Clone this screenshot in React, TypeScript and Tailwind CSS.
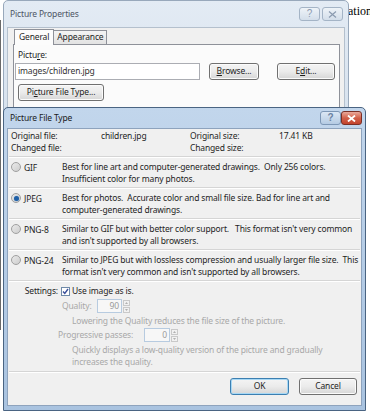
import React from "react";

function TitleBtn({ kind, active }: { kind: "help" | "close"; active?: boolean }) {
  if (kind === "close") {
    return (
      <div
        className={
          active
            ? "w-[21px] h-[14px] rounded-[3px] border border-[#7a2f26] bg-gradient-to-b from-[#e9a99b] via-[#d2604a] to-[#c2432c] flex items-center justify-center"
            : "w-[21px] h-[14px] rounded-[3px] border border-[#a4b4c6] bg-gradient-to-b from-[#eef3f8] to-[#d3deea] flex items-center justify-center"
        }
      >
        <svg width="9" height="7" viewBox="0 0 9 7">
          <path
            d="M1 0.5 L8 6.5 M8 0.5 L1 6.5"
            stroke={active ? "#ffffff" : "#8b9bb0"}
            strokeWidth={active ? 1.8 : 1.2}
            fill="none"
          />
        </svg>
      </div>
    );
  }
  return (
    <div
      className={
        active
          ? "w-[21px] h-[14px] rounded-[3px] border border-[#7d97b6] bg-gradient-to-b from-[#dbe7f4] to-[#b5cbe3] flex items-center justify-center"
          : "w-[21px] h-[14px] rounded-[3px] border border-[#a4b4c6] bg-gradient-to-b from-[#eef3f8] to-[#d3deea] flex items-center justify-center"
      }
    >
      <span
        className={
          active
            ? "text-[10px] leading-none font-bold text-[#6a82a2] font-['Liberation_Sans',sans-serif]"
            : "text-[10px] leading-none text-[#8b9bb0] font-['Liberation_Sans',sans-serif]"
        }
      >
        ?
      </span>
    </div>
  );
}

function Btn({ children, w, def }: { children: React.ReactNode; w: string; def?: boolean }) {
  return (
    <div
      className={
        (def
          ? "border-[#3c7fb1] shadow-[inset_0_0_0_1px_#a7d8f5] "
          : "border-[#707070] shadow-[inset_0_0_0_1px_#fbfbfb] ") +
        w +
        " h-[17px] rounded-[3px] border bg-gradient-to-b from-[#f4f4f4] via-[#ebebeb] to-[#d6d6d6] flex items-center justify-center text-[#1e1e1e]"
      }
    >
      {children}
    </div>
  );
}

function Radio({ on }: { on?: boolean }) {
  return (
    <div className="w-[10px] h-[10px] rounded-full border border-[#a0a0a0] bg-gradient-to-br from-[#eaeaea] to-[#cdcdcd] flex items-center justify-center shrink-0">
      {on && <div className="w-[5px] h-[5px] rounded-full bg-[#1f5fa6] shadow-[0_0_1px_#6fa5dc]" />}
    </div>
  );
}

function Sep() {
  return <div className="-mx-[2px] h-[2px] border-t border-[#d5d5d5] border-b border-b-white" />;
}

function Spinner({ value, w }: { value: string; w: string }) {
  return (
    <div className="flex items-center gap-[1px]">
      <div className={w + " h-[14px] border border-[#b7cbe0] bg-[#f7f7f7] flex items-center justify-end pr-[2px] text-[#9a9a9a]"}>
        {value}
      </div>
      <div className="flex flex-col gap-[1px]">
        <div className="w-[7px] h-[6px] border border-[#c9c9c9] bg-[#f1f1f1] flex items-center justify-center">
          <svg width="3" height="2" viewBox="0 0 3 2"><path d="M0 2 L1.5 0 L3 2 Z" fill="#b0b0b0" /></svg>
        </div>
        <div className="w-[7px] h-[6px] border border-[#c9c9c9] bg-[#f1f1f1] flex items-center justify-center">
          <svg width="3" height="2" viewBox="0 0 3 2"><path d="M0 0 L1.5 2 L3 0 Z" fill="#b0b0b0" /></svg>
        </div>
      </div>
    </div>
  );
}

function Option({ label, on, lines }: { label: string; on?: boolean; lines: string[] }) {
  return (
    <div className="flex pt-[3px] pb-[2px]">
      <div className="w-[51px] shrink-0 flex items-start gap-[3px] pt-[1px] whitespace-nowrap">
        <Radio on={on} />
        <span className="leading-[11px]">{label}</span>
      </div>
      <div className="flex flex-col leading-[12px]">
        {lines.map((l, i) => (
          <span key={i} className="whitespace-pre">{l}</span>
        ))}
      </div>
    </div>
  );
}

function PictureProperties() {
  return (
    <div className="absolute left-[3px] top-0 w-[346px] h-[116px] overflow-hidden border border-[#98a8bb] rounded-t-[5px] bg-gradient-to-b from-[#e3ebf4] to-[#d7e2ee] flex flex-col">
      <div className="h-[26px] shrink-0 flex items-center justify-between pl-[6px] pr-[5px]">
        <span className="text-[8.5px] text-[#4d5563]">Picture Properties</span>
        <div className="flex gap-[2px]">
          <TitleBtn kind="help" />
          <TitleBtn kind="close" />
        </div>
      </div>
      <div className="flex-1 shrink-0 mx-[3px] border border-[#b4c0cd] bg-[#f0f0f0] pt-[0px] pl-[6px] pr-[4px]">
        <div className="flex items-end h-[16px]">
          <div className="h-[16px] px-[4px] border border-b-0 border-[#8e9199] bg-[#fcfcfc] flex items-center relative top-[1px] z-10">
            General
          </div>
          <div className="h-[14px] px-[3px] border border-l-0 border-b-0 border-[#8e9199] bg-gradient-to-b from-[#f4f4f4] to-[#e2e2e2] flex items-center">
            Appearance
          </div>
        </div>
        <div className="h-[80px] border border-[#8e9199] bg-[#fbfbfb] -ml-[1px] pl-[1px] pt-[3px]">
          <div className="pl-[3px] leading-[13px]">
            Pictu<span className="underline">r</span>e:
          </div>
          <div className="flex items-center mt-[2px]">
            <div className="w-[185px] h-[17px] border border-[#abadb3] bg-white flex items-center pl-[2px] text-[#333]">
              images/children.jpg
            </div>
            <div className="ml-[9px]">
              <Btn w="w-[50px]"><span><span className="underline">B</span>rowse...</span></Btn>
            </div>
            <div className="ml-[18px]">
              <Btn w="w-[58px]"><span>E<span className="underline">d</span>it...</span></Btn>
            </div>
          </div>
          <div className="ml-[3px] mt-[4px]">
            <Btn w="w-[86px]"><span>Pi<span className="underline">c</span>ture File Type...</span></Btn>
          </div>
        </div>
      </div>
    </div>
  );
}

function PictureFileType() {
  return (
    <div className="absolute left-[3px] top-[107px] w-[363px] h-[304px] border border-[#4a6482] rounded-t-[5px] bg-gradient-to-b from-[#c2d6ec] to-[#a9c3e0] flex flex-col">
      <div className="h-[20px] shrink-0 flex items-center justify-between pl-[6px] pr-[3px]">
        <span className="text-[8.5px] text-[#1a1a1a]">Picture File Type</span>
        <div className="flex gap-0">
          <TitleBtn kind="help" active />
          <TitleBtn kind="close" active />
        </div>
      </div>
      <div className="flex-1 mx-[3px] mb-[4px] border border-[#8ea3bd] bg-[#f0f0f0] px-[3px] pt-[1px] flex flex-col">
        <div className="grid grid-cols-[90px_89px_89px_1fr] leading-[12px]">
          <span>Original file:</span>
          <span>children.jpg</span>
          <span>Original size:</span>
          <span>17.41 KB</span>
          <span>Changed file:</span>
          <span></span>
          <span>Changed size:</span>
          <span></span>
        </div>
        <div className="mt-[2px]"><Sep /></div>
        <Option label="GIF" lines={["Best for line art and computer-generated drawings.  Only 256 colors.", "Insufficient color for many photos."]} />
        <Sep />
        <Option on label="JPEG" lines={["Best for photos.  Accurate color and small file size. Bad for line art and", "computer-generated drawings."]} />
        <Sep />
        <Option label="PNG-8" lines={["Similar to GIF but with better color support.   This format isn't very common", "and isn't supported by all browsers."]} />
        <Sep />
        <Option label="PNG-24" lines={["Similar to JPEG but with lossless compression and usually larger file size.  This", "format isn't very common and isn't supported by all browsers."]} />
        <Sep />
        <div className="pt-[3px] leading-[12px]">
          <div className="flex items-center">
            <div className="w-[50px] shrink-0 flex justify-end pr-[3px]">
              <span>Settings:</span>
            </div>
            <div className="w-[9px] h-[9px] shrink-0 border border-[#6f8aa8] bg-white flex items-center justify-center">
              <svg width="7" height="7" viewBox="0 0 7 7"><path d="M1 3.5 L2.8 5.5 L6 1" stroke="#3a4f9a" strokeWidth="1.4" fill="none" /></svg>
            </div>
            <span className="ml-[2px]">Use image as is.</span>
          </div>
          <div className="flex items-center mt-[2px] text-[#a8a8a8]">
            <div className="ml-[51px] w-[35px] shrink-0">Quality:</div>
            <Spinner value="90" w="w-[25px]" />
          </div>
          <div className="ml-[61px] mt-[2px] text-[#a8a8a8]">Lowering the Quality reduces the file size of the picture.</div>
          <div className="flex items-center mt-[1px] text-[#a8a8a8]">
            <div className="ml-[47px] w-[86px] shrink-0">Progressive passes:</div>
            <Spinner value="0" w="w-[26px]" />
          </div>
          <div className="ml-[61px] mt-[2px] text-[#a8a8a8]">Quickly displays a low-quality version of the picture and gradually</div>
          <div className="ml-[61px] text-[#a8a8a8]">increases the quality.</div>
        </div>
        <div className="mt-[3px]"><Sep /></div>
        <div className="flex justify-end gap-[10px] pr-[1px] mt-[5px]">
          <Btn w="w-[59px]" def>OK</Btn>
          <Btn w="w-[58px]">Cancel</Btn>
        </div>
      </div>
    </div>
  );
}

export default function App() {
  return (
    <div className="relative w-[370px] h-[411px] overflow-hidden bg-white font-['Noto_Sans','Open_Sans',sans-serif] text-[8.5px] tracking-[-0.15px] text-[#1e1e1e]">
      <div className="absolute left-[348px] top-[4px] font-['Liberation_Serif',serif] text-[12px] leading-[14px] tracking-normal text-black">ation</div>
      <div className="absolute left-0 top-[20px] w-[1px] h-[310px] bg-[#6a6a6a]" />
      <PictureProperties />
      <PictureFileType />
    </div>
  );
}
